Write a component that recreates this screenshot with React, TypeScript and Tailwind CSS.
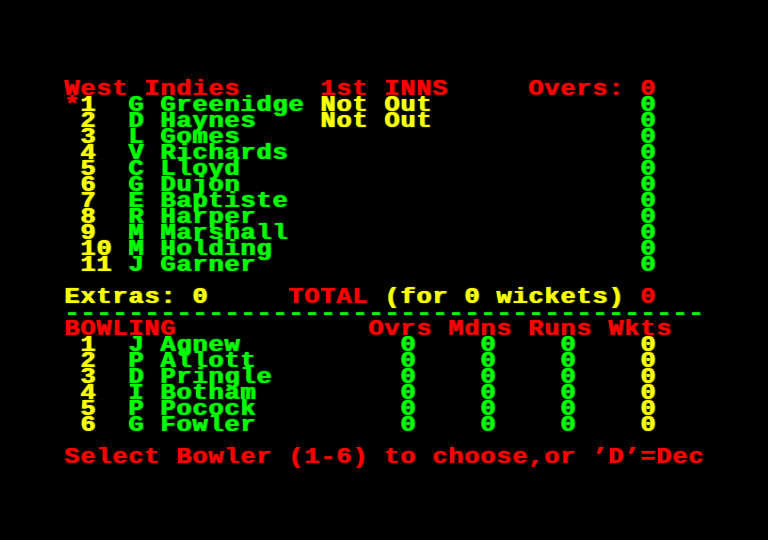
import React from 'react';

type Seg = [number, string, string];

const R = 'text-[#ff0000]';
const Y = 'text-[#ffff00]';
const G = 'text-[#00ff00]';

const batsmen: [string, string][] = [
  ['1', 'G Greenidge'],
  ['2', 'D Haynes'],
  ['3', 'L Gomes'],
  ['4', 'V Richards'],
  ['5', 'C Lloyd'],
  ['6', 'G Dujon'],
  ['7', 'E Baptiste'],
  ['8', 'R Harper'],
  ['9', 'M Marshall'],
  ['10', 'M Holding'],
  ['11', 'J Garner'],
];

const bowlers = ['J Agnew', 'P Allott', 'D Pringle', 'I Botham', 'P Pocock', 'G Fowler'];

const rows: Seg[][] = [
  [
    [0, 'West Indies', R],
    [16, '1st INNS', R],
    [29, 'Overs: 0', R],
  ],
  ...batsmen.map(([n, name], i): Seg[] => [
    ...(i === 0 ? ([[0, '*', R]] as Seg[]) : []),
    [1, n, Y],
    [4, name, G],
    ...(i < 2 ? ([[16, 'Not Out', Y]] as Seg[]) : []),
    [36, '0', G],
  ]),
  [],
  [
    [0, 'Extras: 0', Y],
    [14, 'TOTAL', R],
    [20, '(for 0 wickets)', Y],
    [36, '0', R],
  ],
  [[0, '-'.repeat(40), G]],
  [
    [0, 'BOWLING', R],
    [19, 'Ovrs Mdns Runs Wkts', R],
  ],
  ...bowlers.map((name, i): Seg[] => [
    [1, String(i + 1), Y],
    [4, name, G],
    [21, '0', G],
    [26, '0', G],
    [31, '0', G],
    [36, '0', Y],
  ]),
  [],
  [[0, 'Select Bowler (1-6) to choose,or ’D’=Dec', R]],
];

// one text line of the 40-column screen; glyphs stretched sideways like mode 1 pixels
function Row({ segs }: { segs: Seg[] }) {
  let col = 0;
  return (
    <div className="h-4 whitespace-pre origin-left scale-x-[1.15]">
      {segs.map(([at, text, color], i) => {
        const pad = ' '.repeat(Math.max(0, at - col));
        col = at + text.length;
        return (
          <React.Fragment key={i}>
            {pad}
            <span className={color}>{text}</span>
          </React.Fragment>
        );
      })}
      {segs.length === 0 ? ' ' : null}
    </div>
  );
}

export default function App() {
  return (
    <div className="w-[768px] h-[540px] bg-black overflow-hidden pt-[82px] pl-[64px]">
      <div className="w-[640px] font-['Liberation_Mono',monospace] font-bold text-[22px] leading-4 tracking-[0.711px] [text-shadow:1px_0_1px_currentColor]">
        {rows.map((segs, i) => (
          <Row key={i} segs={segs} />
        ))}
      </div>
    </div>
  );
}
